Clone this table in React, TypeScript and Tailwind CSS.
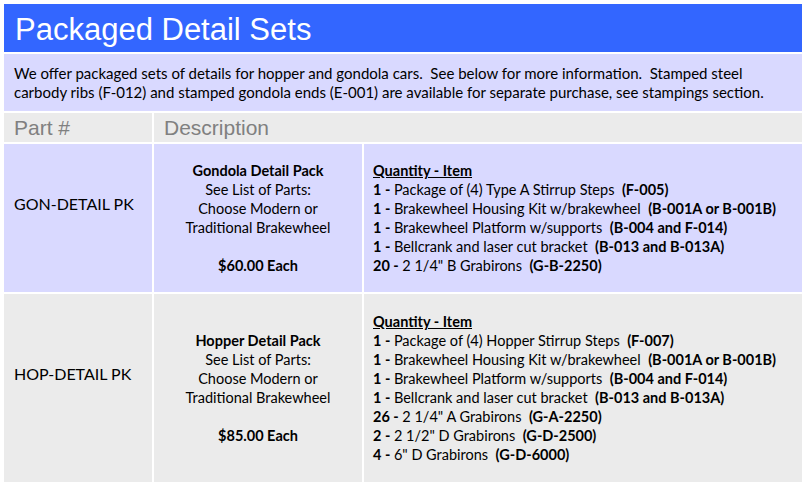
import React from 'react';

const body = { fontFamily: 'Lato, "Open Sans", sans-serif' };
const arial = { fontFamily: '"Liberation Sans", Arial, sans-serif' };

type Item = { qty: string; text: string; code: string };

const gonItems: Item[] = [
  { qty: '1', text: 'Package of (4) Type A Stirrup Steps', code: '(F-005)' },
  { qty: '1', text: 'Brakewheel Housing Kit w/brakewheel', code: '(B-001A or B-001B)' },
  { qty: '1', text: 'Brakewheel Platform w/supports', code: '(B-004 and F-014)' },
  { qty: '1', text: 'Bellcrank and laser cut bracket', code: '(B-013 and B-013A)' },
  { qty: '20', text: '2 1/4" B Grabirons', code: '(G-B-2250)' },
];

const hopItems: Item[] = [
  { qty: '1', text: 'Package of (4) Hopper Stirrup Steps', code: '(F-007)' },
  { qty: '1', text: 'Brakewheel Housing Kit w/brakewheel', code: '(B-001A or B-001B)' },
  { qty: '1', text: 'Brakewheel Platform w/supports', code: '(B-004 and F-014)' },
  { qty: '1', text: 'Bellcrank and laser cut bracket', code: '(B-013 and B-013A)' },
  { qty: '26', text: '2 1/4" A Grabirons', code: '(G-A-2250)' },
  { qty: '2', text: '2 1/2" D Grabirons', code: '(G-D-2500)' },
  { qty: '4', text: '6" D Grabirons', code: '(G-D-6000)' },
];

function PackRow({
  part,
  name,
  price,
  items,
  bg,
  height,
}: {
  part: string;
  name: string;
  price: string;
  items: Item[];
  bg: string;
  height: string;
}) {
  return (
    <tr className={bg}>
      <td className={`${height} pl-[10px] pb-[30px] align-middle text-[16px] leading-[19px] text-black`} style={body}>
        {part}
      </td>
      <td className="align-middle text-center text-[14.5px] leading-[19px] text-black" style={body}>
        <div className="font-bold">{name}</div>
        <div>See List of Parts:</div>
        <div>Choose Modern or</div>
        <div>Traditional Brakewheel</div>
        <div>&nbsp;</div>
        <div className="font-bold">{price}</div>
      </td>
      <td className="pl-[9px] align-middle text-[14.5px] leading-[19px] text-black" style={body}>
        <div className="font-bold underline">Quantity - Item</div>
        {items.map((it, i) => (
          <div key={i} className="whitespace-pre">
            <span className="font-bold">{it.qty} - </span>
            {it.text}
            {'  '}
            <span className="font-bold">{it.code}</span>
          </div>
        ))}
      </td>
    </tr>
  );
}

export default function App() {
  return (
    <div className="w-[806px] h-[487px] bg-white p-[2px] overflow-hidden">
      <table className="w-[802px] border-separate border-spacing-[2px] table-fixed">
        <colgroup>
          <col className="w-[148px]" />
          <col className="w-[208px]" />
          <col />
        </colgroup>
        <tbody>
          <tr>
            <td
              colSpan={3}
              className="h-[48px] bg-[#3366ff] pl-[11px] pt-[3px] align-middle text-[31px] leading-none text-white"
              style={arial}
            >
              Packaged Detail Sets
            </td>
          </tr>
          <tr>
            <td
              colSpan={3}
              className="h-[57px] bg-[#d9d9ff] px-[10px] align-middle text-[15px] leading-[19px] text-black"
              style={body}
            >
              We offer packaged sets of details for hopper and gondola cars.&nbsp; See below for more information.&nbsp;
              Stamped steel
              <br />
              carbody ribs (F-012) and stamped gondola ends (E-001) are available for separate purchase, see stampings
              section.
            </td>
          </tr>
          <tr className="bg-[#ebebeb]">
            <td className="h-[29px] pl-[10px] align-middle text-[21px] leading-none text-[#808080]" style={arial}>
              Part #
            </td>
            <td colSpan={2} className="pl-[10px] align-middle text-[21px] leading-none text-[#808080]" style={arial}>
              Description
            </td>
          </tr>
          <PackRow
            part="GON-DETAIL PK"
            name="Gondola Detail Pack"
            price="$60.00 Each"
            items={gonItems}
            bg="bg-[#d9d9ff]"
            height="h-[148px]"
          />
          <PackRow
            part="HOP-DETAIL PK"
            name="Hopper Detail Pack"
            price="$85.00 Each"
            items={hopItems}
            bg="bg-[#ebebeb]"
            height="h-[188px]"
          />
        </tbody>
      </table>
    </div>
  );
}
